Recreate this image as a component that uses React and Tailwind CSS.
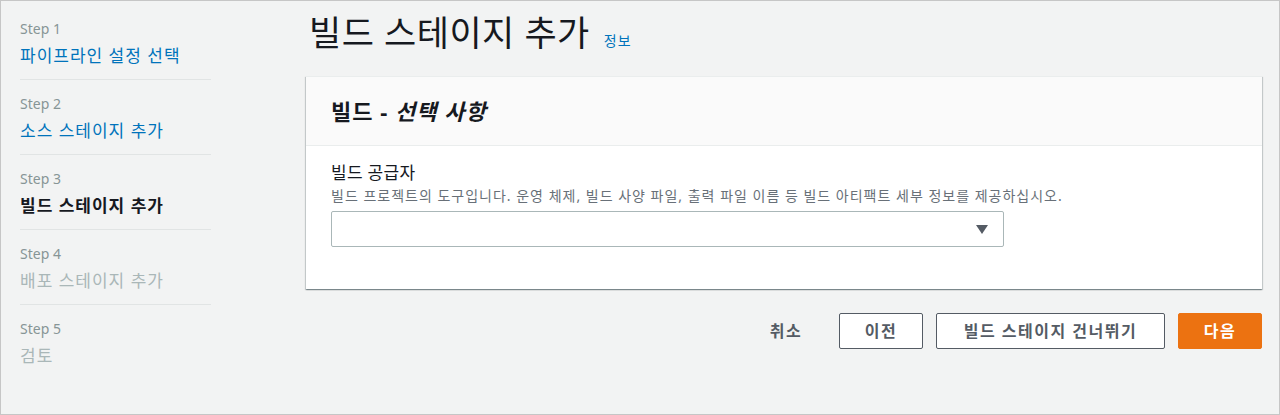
import { useState } from "react";

const steps = [
  { step: "Step 1", label: "파이프라인 설정 선택", state: "link" },
  { step: "Step 2", label: "소스 스테이지 추가", state: "link" },
  { step: "Step 3", label: "빌드 스테이지 추가", state: "active" },
  { step: "Step 4", label: "배포 스테이지 추가", state: "disabled" },
  { step: "Step 5", label: "검토", state: "disabled" },
];

const labelColor = {
  link: "text-[#0073bb]",
  active: "text-[#16191f] font-bold",
  disabled: "text-[#aab7b8]",
};

const font = { fontFamily: '"Noto Sans", "Noto Sans CJK KR", sans-serif' };

export default function App() {
  const [provider, setProvider] = useState("");

  return (
    <div
      className="w-[1280px] h-[415px] bg-[#f2f3f3] border border-[#c6c6c6] flex pl-[19px] overflow-hidden"
      style={font}
    >
      {/* Wizard steps */}
      <nav className="w-[191px] pt-[18px] shrink-0">
        <ul>
          {steps.map((s, i) => (
            <li
              key={i}
              className={
                i < steps.length - 1
                  ? "pb-[11px] border-b border-[#e1e4e4] mb-[14px]"
                  : ""
              }
            >
              <div className="text-[14px] leading-[20px] text-[#879596]">
                {s.step}
              </div>
              <div
                className={`mt-[5px] text-[17px] leading-[24px] tracking-[1px] ${labelColor[s.state]}`}
              >
                {s.label}
              </div>
            </li>
          ))}
        </ul>
      </nav>

      {/* Main column */}
      <main className="ml-[95px] w-[956px] pt-[12px]">
        <div className="flex items-baseline gap-[14px] mb-[23px] pl-[3px]">
          <h1 className="text-[35px] leading-[40px] font-normal tracking-[0.5px] text-[#16191f]">
            빌드 스테이지 추가
          </h1>
          <a href="#" className="text-[14px] tracking-[1px] text-[#0073bb]">
            정보
          </a>
        </div>

        <section className="bg-white shadow-[0_1px_1px_0_rgba(0,28,36,0.3),1px_1px_1px_0_rgba(0,28,36,0.15),-1px_1px_1px_0_rgba(0,28,36,0.15)] border-t border-[#eaeded]">
          <header className="h-[69px] bg-[#fafafa] border-b border-[#eaeded] flex items-center px-[25px]">
            <h2 className="text-[22px] font-bold tracking-[1px] text-[#16191f]">
              빌드 - <i>선택 사항</i>
            </h2>
          </header>
          <div className="pt-[15px] pb-[42px] px-[25px]">
            <label className="block text-[17px] leading-[24px] tracking-[0.3px] text-[#16191f]">
              빌드 공급자
            </label>
            <p className="mt-[1px] text-[14px] leading-[20px] tracking-[1px] text-[#687078]">
              빌드 프로젝트의 도구입니다. 운영 체제, 빌드 사양 파일, 출력 파일
              이름 등 빌드 아티팩트 세부 정보를 제공하십시오.
            </p>
            <div className="mt-[5px] relative w-[673px]">
              <select
                value={provider}
                onChange={(e) => setProvider(e.target.value)}
                className="appearance-none w-full h-[36px] bg-white border border-[#aab7b8] rounded-[2px] px-[10px] text-[14px]"
              >
                <option value=""></option>
                <option value="codebuild">AWS CodeBuild</option>
                <option value="jenkins">Jenkins</option>
              </select>
              <svg
                className="absolute right-[16px] top-[14px] pointer-events-none"
                width="12"
                height="9"
                viewBox="0 0 12 9"
              >
                <path d="M0 0h12L6 9z" fill="#545b64" />
              </svg>
            </div>
          </div>
        </section>

        {/* Actions */}
        <div className="mt-[24px] flex justify-end items-center gap-[13px]">
          <button className="w-[74px] h-[36px] mr-[3px] text-[16px] tracking-[1.5px] font-bold text-[#545b64]">
            취소
          </button>
          <button className="w-[84px] h-[36px] bg-white border border-[#545b64] rounded-[2px] text-[16px] tracking-[1.5px] font-bold text-[#545b64]">
            이전
          </button>
          <button className="w-[229px] h-[36px] bg-white border border-[#545b64] rounded-[2px] text-[16px] tracking-[1.5px] font-bold text-[#545b64]">
            빌드 스테이지 건너뛰기
          </button>
          <button className="w-[84px] h-[36px] bg-[#ec7211] border border-[#ec7211] rounded-[2px] text-[16px] tracking-[1.5px] font-bold text-white">
            다음
          </button>
        </div>
      </main>
    </div>
  );
}
